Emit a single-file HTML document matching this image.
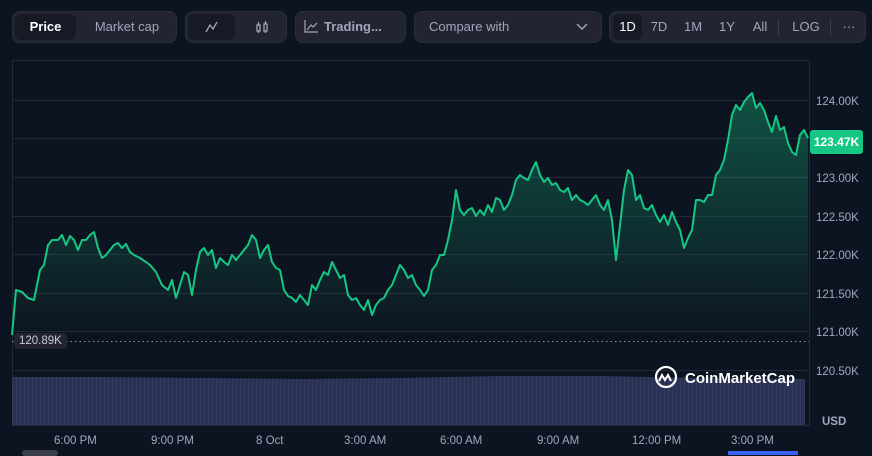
<!DOCTYPE html>
<html><head><style>
*{margin:0;padding:0;box-sizing:border-box}
body{width:872px;height:453px;background:#0d1421;font-family:"Liberation Sans",sans-serif;position:relative;overflow:hidden;color:#a1a7bb}
.g{position:absolute;top:11px;height:32px;background:#222531;border-radius:8px;border:1px solid #2a2e3a}
.b{position:absolute;top:2px;height:26px;border-radius:6px;font-size:13px;line-height:26px;text-align:center;color:#a1a7bb}
.a{background:#171924;color:#fff;font-weight:bold}
.ax{position:absolute;font-size:11.5px;color:#a1a7bb}
</style></head><body>
<div class="g" style="left:12px;width:165px"><div class="b a" style="left:2px;width:61px">Price</div><div class="b" style="left:66px;width:96px">Market cap</div></div>
<div class="g" style="left:185px;width:102px"><div class="b a" style="left:2px;width:47px;font-weight:normal"><svg width="14" height="12" viewBox="0 0 14 12" style="margin-top:7px"><path d="M1 11L5 4L8 8L12 1" fill="none" stroke="#a1a7bb" stroke-width="1.3"/></svg></div><div class="b" style="left:52px;width:47px"><svg width="14" height="14" viewBox="0 0 14 14" style="margin-top:6px" fill="none" stroke="#a1a7bb" stroke-width="1.3"><rect x="2" y="5" width="3" height="6"/><path d="M3.5 2v3M3.5 11v2"/><rect x="9" y="4" width="3" height="7"/><path d="M10.5 1v3M10.5 11v2"/></svg></div></div>
<div class="g" style="left:295px;width:111px"><div class="b" style="left:8px;width:95px;font-weight:bold;text-align:left"><svg width="14" height="13" viewBox="0 0 14 13" style="vertical-align:-2px;margin-right:6px" fill="none" stroke="#a1a7bb" stroke-width="1.2"><path d="M1 0v12h13M3 10l4-5 2 2 4-4"/></svg>Trading...</div></div>
<div class="g" style="left:414px;width:188px"><div class="b" style="left:14px;width:90px;text-align:left">Compare with</div><svg style="position:absolute;left:161px;top:11px" width="12" height="8" viewBox="0 0 12 8"><path d="M1 1l5 5 5-5" fill="none" stroke="#a1a7bb" stroke-width="1.5"/></svg></div>
<div class="g" style="left:609px;width:257px">
<div class="b a" style="left:3px;width:29px;font-weight:normal">1D</div>
<div class="b" style="left:36px;width:26px">7D</div>
<div class="b" style="left:70px;width:26px">1M</div>
<div class="b" style="left:104px;width:26px">1Y</div>
<div class="b" style="left:137px;width:26px">All</div>
<div style="position:absolute;left:168px;top:7px;width:1px;height:17px;background:#3a3e4c"></div>
<div class="b" style="left:178px;width:36px">LOG</div>
<div style="position:absolute;left:220px;top:7px;width:1px;height:17px;background:#3a3e4c"></div>
<div class="b" style="left:226px;width:26px">···</div>
</div>
<svg width="872" height="453" style="position:absolute;left:0;top:0">
<defs><linearGradient id="gr" x1="0" y1="0" x2="0" y2="1"><stop offset="0" stop-color="#16c784" stop-opacity=".35"/><stop offset="1" stop-color="#16c784" stop-opacity="0"/></linearGradient>
<pattern id="vp" width="4" height="10" patternUnits="userSpaceOnUse"><rect width="4" height="10" fill="#2b3152"/><rect width="1" height="10" fill="#323a5e"/></pattern></defs>
<g stroke="#222836" stroke-width="1">
<line x1="12" y1="60.5" x2="809" y2="60.5"/><line x1="12" y1="100.5" x2="809" y2="100.5"/><line x1="12" y1="138.5" x2="809" y2="138.5"/><line x1="12" y1="177.5" x2="809" y2="177.5"/><line x1="12" y1="216.5" x2="809" y2="216.5"/><line x1="12" y1="254.5" x2="809" y2="254.5"/><line x1="12" y1="293.5" x2="809" y2="293.5"/><line x1="12" y1="331.5" x2="809" y2="331.5"/><line x1="12" y1="370.5" x2="809" y2="370.5"/>
<line x1="12.5" y1="60" x2="12.5" y2="426"/><line x1="809.5" y1="60" x2="809.5" y2="426"/><line x1="12" y1="425.5" x2="809" y2="425.5"/>
</g>
<path d="M12 377L100 377L200 378L300 379L400 378L500 376L600 376L650 377L700 378L805 379L805 425L12 425Z" fill="url(#vp)"/>
<line x1="12" y1="341.5" x2="809" y2="341.5" stroke="#8a90a0" stroke-dasharray="1.5 3"/>
<path d="M12 335L16 290L22 292L28 298L34 300L40 270L44 265L48 245L52 240L58 240L62 235L66 245L70 236L74 240L78 250L82 240L86 240L90 235L94 232L98 248L102 258L106 255L110 250L114 245L118 243L122 248L126 244L130 252L134 255L140 258L146 262L150 265L156 272L162 285L168 290L172 280L176 298L180 285L184 272L188 275L192 295L196 270L200 252L204 248L208 255L212 250L216 268L220 258L224 262L228 265L232 255L236 260L240 255L244 250L248 245L252 235L256 240L260 258L264 250L268 245L272 262L276 268L280 270L284 290L288 296L292 298L296 302L300 295L304 300L308 305L312 285L316 290L320 280L324 272L328 275L332 262L336 270L340 278L344 275L348 295L352 300L356 298L360 305L364 310L368 300L372 315L376 305L380 300L384 298L388 290L392 285L396 275L400 265L404 270L408 278L412 275L416 285L420 290L424 296L428 290L432 270L436 265L440 255L444 255L448 240L452 220L456 190L460 210L464 215L468 210L472 208L476 216L480 210L484 215L488 205L492 212L496 198L500 200L504 210L508 205L512 195L516 180L520 175L524 178L528 180L532 170L536 162L540 175L544 182L548 178L552 185L556 183L560 190L564 192L568 188L572 200L576 195L580 200L584 202L588 205L592 200L596 195L600 205L604 210L608 200L612 220L616 260L620 225L624 190L628 170L632 175L636 200L640 195L644 208L648 210L652 205L656 215L660 222L664 215L668 225L672 212L676 222L680 230L684 248L688 238L692 230L696 200L700 200L704 202L708 195L712 195L716 175L720 170L724 160L728 140L732 115L736 105L740 110L744 102L748 97L752 93L756 108L760 103L764 110L768 122L772 132L776 116L780 130L784 127L788 143L792 152L796 155L800 135L804 130L808 138" fill="none" stroke="#16c784" stroke-width="2" stroke-linejoin="round"/>
<path d="M12 335L16 290L22 292L28 298L34 300L40 270L44 265L48 245L52 240L58 240L62 235L66 245L70 236L74 240L78 250L82 240L86 240L90 235L94 232L98 248L102 258L106 255L110 250L114 245L118 243L122 248L126 244L130 252L134 255L140 258L146 262L150 265L156 272L162 285L168 290L172 280L176 298L180 285L184 272L188 275L192 295L196 270L200 252L204 248L208 255L212 250L216 268L220 258L224 262L228 265L232 255L236 260L240 255L244 250L248 245L252 235L256 240L260 258L264 250L268 245L272 262L276 268L280 270L284 290L288 296L292 298L296 302L300 295L304 300L308 305L312 285L316 290L320 280L324 272L328 275L332 262L336 270L340 278L344 275L348 295L352 300L356 298L360 305L364 310L368 300L372 315L376 305L380 300L384 298L388 290L392 285L396 275L400 265L404 270L408 278L412 275L416 285L420 290L424 296L428 290L432 270L436 265L440 255L444 255L448 240L452 220L456 190L460 210L464 215L468 210L472 208L476 216L480 210L484 215L488 205L492 212L496 198L500 200L504 210L508 205L512 195L516 180L520 175L524 178L528 180L532 170L536 162L540 175L544 182L548 178L552 185L556 183L560 190L564 192L568 188L572 200L576 195L580 200L584 202L588 205L592 200L596 195L600 205L604 210L608 200L612 220L616 260L620 225L624 190L628 170L632 175L636 200L640 195L644 208L648 210L652 205L656 215L660 222L664 215L668 225L672 212L676 222L680 230L684 248L688 238L692 230L696 200L700 200L704 202L708 195L712 195L716 175L720 170L724 160L728 140L732 115L736 105L740 110L744 102L748 97L752 93L756 108L760 103L764 110L768 122L772 132L776 116L780 130L784 127L788 143L792 152L796 155L800 135L804 130L808 138L808 340L12 340Z" fill="url(#gr)"/>
<g fill="none" stroke="#fff" stroke-width="2.2"><circle cx="666" cy="377" r="10"/></g>
<path d="M659 381l3-6 3 5 3-5 3 6" fill="none" stroke="#fff" stroke-width="2"/>
<text x="685" y="383" fill="#fff" font-size="15" font-weight="bold" font-family="Liberation Sans">CoinMarketCap</text>
</svg>
<div style="position:absolute;left:14px;top:333px;background:#222531;border-radius:4px;padding:2px 5px;font-size:11.5px;color:#c7cbd6">120.89K</div>
<div class="ax" style="left:816px;top:96px">124.00K</div>
<div class="ax" style="left:816px;top:173px">123.00K</div>
<div class="ax" style="left:816px;top:212px">122.50K</div>
<div class="ax" style="left:816px;top:250px">122.00K</div>
<div class="ax" style="left:816px;top:289px">121.50K</div>
<div class="ax" style="left:816px;top:327px">121.00K</div>
<div class="ax" style="left:816px;top:366px">120.50K</div>
<div class="ax" style="left:822px;top:416px;font-weight:bold">USD</div>
<div style="position:absolute;left:810px;top:130px;width:53px;height:24px;background:#16c784;border-radius:3px;color:#fff;font-size:12px;font-weight:bold;line-height:24px;text-align:center">123.47K</div>
<div class="ax" style="left:54px;top:435px">6:00 PM</div>
<div class="ax" style="left:151px;top:435px">9:00 PM</div>
<div class="ax" style="left:256px;top:435px">8 Oct</div>
<div class="ax" style="left:344px;top:435px">3:00 AM</div>
<div class="ax" style="left:440px;top:435px">6:00 AM</div>
<div class="ax" style="left:537px;top:435px">9:00 AM</div>
<div class="ax" style="left:632px;top:435px">12:00 PM</div>
<div class="ax" style="left:731px;top:435px">3:00 PM</div>
<div style="position:absolute;left:22px;top:450px;width:36px;height:6px;background:#3a3e4c;border-radius:3px"></div>
<div style="position:absolute;left:728px;top:451px;width:70px;height:4px;background:#3861fb"></div>
</body></html>
